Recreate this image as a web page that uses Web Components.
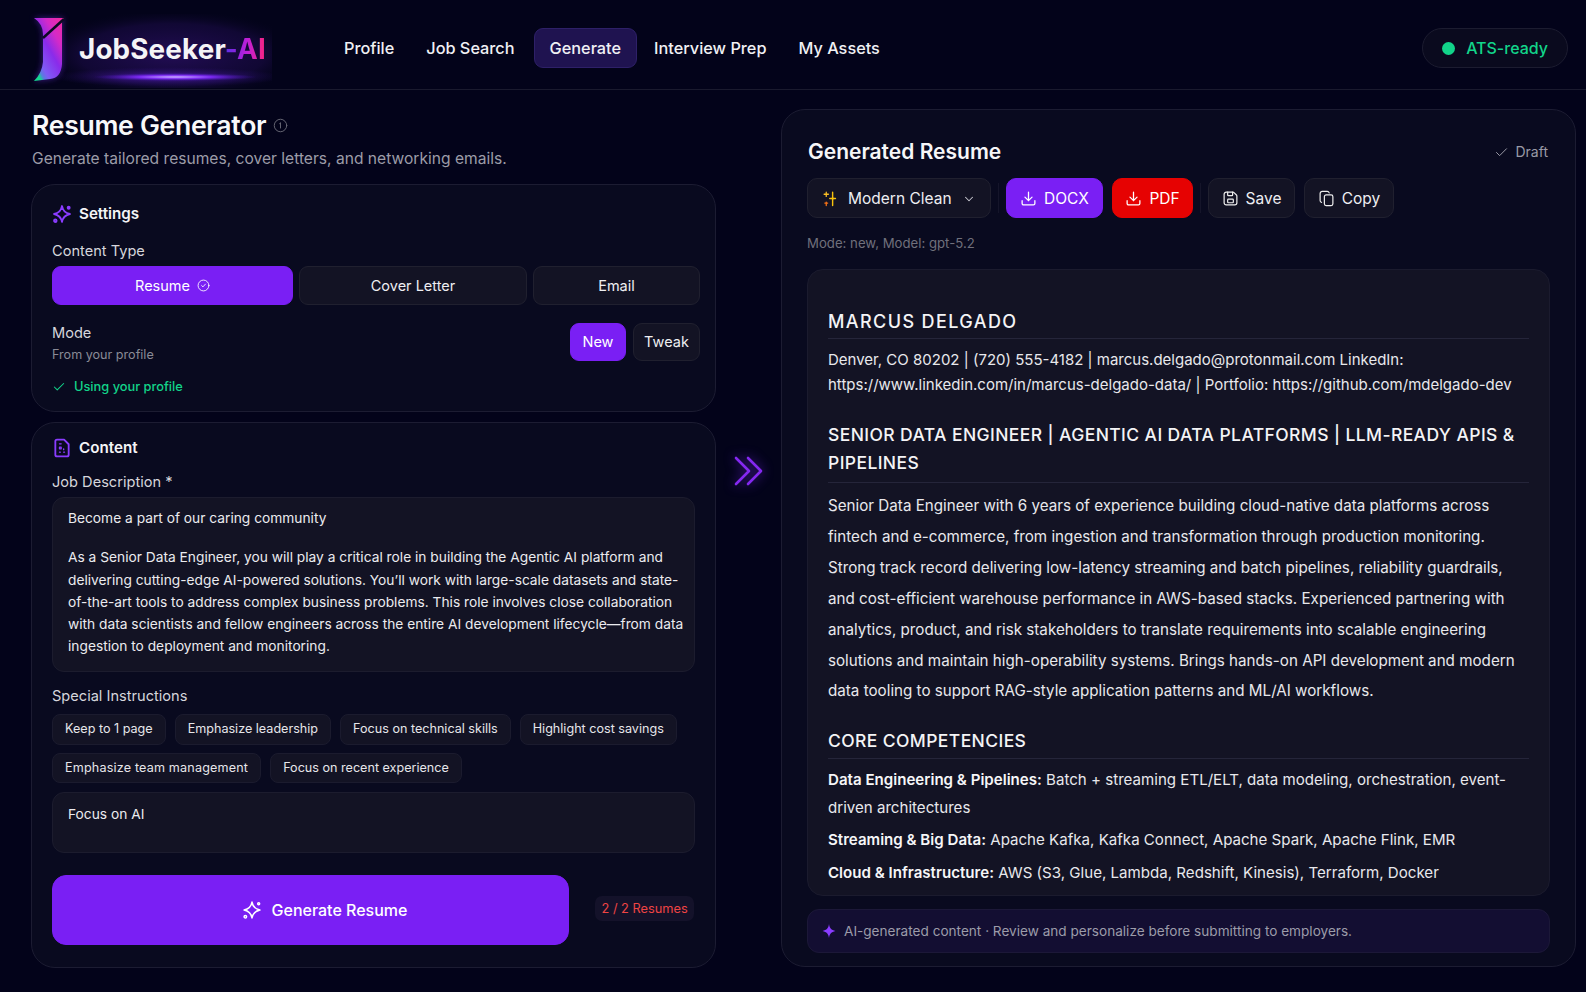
<!DOCTYPE html>
<html lang="en"><head><meta charset="utf-8"><title>Resume Generator</title>
<style>
html,body{margin:0;padding:0;background:#03031a;}
body{width:1586px;height:992px;overflow:hidden;font-family:Inter,"Liberation Sans",sans-serif;color:#f2f2f5;}
</style></head><body>
<js-app></js-app>
<script>
const I={
 spark2:'<path d="M12 2.500c1 5.700 3.500 8.200 9.500 9.500-6 1.300-8.500 3.800-9.500 9.500-1-5.700-3.500-8.200-9.500-9.500 6-1.300 8.500-3.800 9.500-9.500z"/><circle cx="20" cy="4.500" r="1.200"/><circle cx="4" cy="20" r="1.500"/>',
 file:'<path d="M6 2h8.500L20 7.500V20a2 2 0 0 1-2 2H6a2 2 0 0 1-2-2V4a2 2 0 0 1 2-2z"/><path d="M9 7h2M9 11h2v2H9zM9 17h1M14 13v1M14 17h1" stroke-width="1.600"/>',
 check:'<path d="M20 6 9 17l-5-5"/>',
 checkc:'<circle cx="12" cy="12" r="10"/><path d="m8.500 12 2.500 2.500 4.500-5"/>',
 down:'<path d="m6 9 6 6 6-6"/>',
 dl:'<path d="M12 3v12M7 10l5 5 5-5M21 15v4a2 2 0 0 1-2 2H5a2 2 0 0 1-2-2v-4"/>',
 save:'<path d="M6 3h9.500a2 2 0 0 1 1.400.6l3.500 3.500a2 2 0 0 1 .6 1.400V18a3 3 0 0 1-3 3H6a3 3 0 0 1-3-3V6a3 3 0 0 1 3-3z"/><path d="M8 3v4a1 1 0 0 0 1 1h5a1 1 0 0 0 1-1V3"/><rect x="8" y="13" width="8" height="5" rx="1"/>',
 copy:'<rect x="9" y="7" width="12" height="15" rx="2.500"/><path d="M5 17.500a2.500 2.500 0 0 1-2-2.500V5a3 3 0 0 1 3-3h7a3 3 0 0 1 2.800 2"/>',
 info:'<circle cx="12" cy="12" r="10"/><path d="M10.500 9 12 7.500V16"/>',
};
const svg=(n,s,c='currentColor',w=2)=>`<svg width="${s}" height="${s}" viewBox="0 0 24 24" fill="none" stroke="${c}" stroke-width="${w}" stroke-linecap="round" stroke-linejoin="round" style="display:block;flex:none">${I[n]}</svg>`;
const wand=`<svg width="17" height="17" viewBox="0 0 24 24" style="display:block;flex:none" fill="none" stroke-linecap="round"><path d="M15 3v19M11 12h8" stroke="#f8c20c" stroke-width="2"/><path d="M15 8.500c.3 2.300 1 3 3.500 3.500-2.500.5-3.200 1.200-3.500 3.500-.3-2.300-1-3-3.500-3.500 2.500-.5 3.200-1.200 3.500-3.500z" fill="#f8c20c"/><path d="M6 3v6M3 6h6" stroke="#fbbf24" stroke-width="1.800"/><path d="M6 17v5M4 18.500h4" stroke="#f97316" stroke-width="1.800"/></svg>`;
function def(name,css,html){
 customElements.define(name,class extends HTMLElement{
  constructor(){super();const r=this.attachShadow({mode:'open'});
   r.innerHTML=`<style>${css}</style>${html}`;}
 });
}
def('js-logo',`:host{display:block;position:relative;width:244px;height:78px;flex:none}
 svg{position:absolute;left:0;top:0}
 span{position:absolute;left:51px;top:20px;font:700 27.800px/38px Inter,sans-serif;letter-spacing:.15px;color:#f4f4f6;white-space:nowrap}
 b{font-weight:700;background:linear-gradient(90deg,#5a30e8 0,#7a28e0 18%,#c01fd8 55%,#f0248c 92%);-webkit-background-clip:text;background-clip:text;color:transparent}`,
 `<svg width="244" height="78" viewBox="0 0 244 78">
  <defs>
  <radialGradient id="g" cx=".55" cy=".55" r=".6"><stop offset="0" stop-color="#2a0f63" stop-opacity=".8"/><stop offset=".7" stop-color="#1a0b45" stop-opacity=".6"/><stop offset="1" stop-color="#0a0624" stop-opacity="0"/></radialGradient>
  <radialGradient id="h" cx=".5" cy=".5" r=".5"><stop offset="0" stop-color="#fff"/><stop offset=".12" stop-color="#b68cff"/><stop offset=".45" stop-color="#7a28f0"/><stop offset="1" stop-color="#3a0fa0" stop-opacity="0"/></radialGradient>
  <radialGradient id="h2" cx=".5" cy=".5" r=".5"><stop offset="0" stop-color="#5a1fc0" stop-opacity=".85"/><stop offset="1" stop-color="#2a0f70" stop-opacity="0"/></radialGradient>
  <linearGradient id="j" x1=".95" y1="0" x2=".1" y2="1"><stop offset="0" stop-color="#f42aa0"/><stop offset=".28" stop-color="#d42ac8"/><stop offset=".5" stop-color="#8a2bea"/><stop offset=".78" stop-color="#7e5cf5"/><stop offset=".86" stop-color="#5a7ae0"/><stop offset=".93" stop-color="#14d890"/></linearGradient>
  <filter id="b" x="-30%" y="-30%" width="160%" height="160%"><feGaussianBlur stdDeviation="3"/></filter>
  </defs>
  <rect x="22" y="4" width="222" height="74" fill="url(#g)"/>
  <ellipse cx="140" cy="67" rx="116" ry="10" fill="url(#h2)"/>
  <ellipse cx="147" cy="67" rx="82" ry="4" fill="url(#h)"/>
  <path d="M6 8H36L34 12V54Q33 68 22 69L6 71Q14 63 15 52V24Q15 14 6 8Z" fill="#6a2be0" opacity=".55" filter="url(#b)"/>
  <path d="M6 8H36L34 12V54Q33 68 22 69L6 71Q14 63 15 52V24Q15 14 6 8Z" fill="url(#j)"/>
  <path d="M36 9L15 28" stroke="#0c0a24" stroke-width="2.500"/>
 </svg><span>JobSeeker<b>-AI</b></span>`);
def('js-nav-item',`:host{display:flex;align-items:center;height:38px;padding:0 14px;font:500 16.300px/20px Inter,sans-serif;color:#f0f0f4;border:1px solid transparent;border-radius:9px}
 :host([active]){background:#1f1350;border-color:#2e2068;padding:0 15px;margin-left:2px}`,`<slot></slot>`);
def('js-status',`:host{display:flex;align-items:center;gap:11px;height:38px;padding:0 19px;border:1px solid #1c1c30;border-radius:20px;background:#0a0a1e;color:#12d48a;font:500 16px/20px Inter,sans-serif}
 i{width:13px;height:13px;border-radius:50%;background:#12d48a}`,`<i></i><slot></slot>`);
def('js-header',`:host{display:flex;align-items:center;height:82px;padding:7px 18px 0 28px;border-bottom:1px solid #1a1a2e;box-sizing:content-box}
 .logo{margin-top:1px}.nav{display:flex;gap:2px;margin-left:57px;flex:1}`,
 `<js-logo class="logo"></js-logo><div class="nav"><slot name="nav"></slot></div><slot name="status"></slot>`);
def('js-card',`:host{display:block;box-sizing:border-box;background:#090a1f;border:1px solid #1c1c32;border-radius:24px;padding:var(--p,16px 20px)}`,`<slot></slot>`);
def('js-title',`:host{display:flex;align-items:center;gap:7px;height:22px;font:600 15.200px/22px Inter,sans-serif;color:#f4f4f6}`,`<slot name="i"></slot><slot></slot>`);
def('js-label',`:host{display:block;font:400 14.600px/20px Inter,sans-serif;color:#d6d6dc}`,`<slot></slot>`);
def('js-btn',`:host{display:inline-flex;align-items:center;justify-content:center;gap:7px;box-sizing:border-box;height:var(--h,39px);padding:0 10px;border-radius:9px;border:1px solid #20202f;background:#131324;color:#eeeef2;font:400 14.500px/20px Inter,sans-serif;white-space:nowrap}
 :host([primary]){background:#7a1ff4;border-color:#7a1ff4;color:#fff}
 :host([red]){background:#e60202;border-color:#e60202;color:#fff}`,`<slot name="i"></slot><slot></slot><slot name="e"></slot>`);
def('js-chip',`:host{display:inline-flex;align-items:center;box-sizing:border-box;height:30.500px;padding:0 12px;border-radius:8px;border:1px solid #1b1b2e;background:#131324;color:#e6e6ea;font:400 12.600px/18px Inter,sans-serif;white-space:nowrap}`,`<slot></slot>`);
def('js-area',`:host{display:block;box-sizing:border-box;width:643px;padding:var(--ap,9px 8px 9px 15px);background:#131324;border:1px solid #1c1c2e;border-radius:12px;color:#ebebef;font:400 13.750px/22.300px Inter,sans-serif}`,`<slot></slot>`);
def('js-resume',`:host{display:block;box-sizing:border-box;height:627px;overflow:hidden;background:#131324;border:1px solid #1b1b2e;border-radius:16px;padding:40px 20px 0;color:#e8e8ec;font:400 15.100px/25px Inter,sans-serif}
 h1,h2{margin:0;font-weight:500;color:#f4f4f6;border-bottom:1px solid #25253a;text-transform:uppercase}
 h1{font-size:18px;line-height:24px;letter-spacing:1.400px;padding-bottom:4px}
 h2{font-size:17.500px;line-height:28px;letter-spacing:.4px;padding-bottom:5px;margin-top:24px}
 h2.c{line-height:24px;margin-top:22px}
 p{margin:8px 0 0}
 .k{font-size:15px}
 .s{line-height:30.900px;font-size:15.200px}
 .l{line-height:27.500px;margin-top:5px}
 b{font-weight:600;color:#f6f6f8}`,
 `<h1>Marcus Delgado</h1>
 <p class="k">Denver, CO 80202 | (720) 555-4182 | marcus.delgado@protonmail.com LinkedIn: https://www.linkedin.com/in/marcus-delgado-data/ | Portfolio: https://github.com/mdelgado-dev</p>
 <h2>Senior Data Engineer | Agentic AI Data Platforms | LLM-Ready APIs &amp; Pipelines</h2>
 <p class="s">Senior Data Engineer with 6 years of experience building cloud-native data platforms across fintech and e-commerce, from ingestion and transformation through production monitoring. Strong track record delivering low-latency streaming and batch pipelines, reliability guardrails, and cost-efficient warehouse performance in AWS-based stacks. Experienced partnering with analytics, product, and risk stakeholders to translate requirements into scalable engineering solutions and maintain high-operability systems. Brings hands-on API development and modern data tooling to support RAG-style application patterns and ML/AI workflows.</p>
 <h2 class="c">Core Competencies</h2>
 <div><p class="l" style="margin-top:7px"><b>Data Engineering &amp; Pipelines:</b> Batch + streaming ETL/ELT, data modeling, orchestration, event-driven architectures</p>
 <p class="l"><b>Streaming &amp; Big Data:</b> Apache Kafka, Kafka Connect, Apache Spark, Apache Flink, EMR</p>
 <p class="l"><b>Cloud &amp; Infrastructure:</b> AWS (S3, Glue, Lambda, Redshift, Kinesis), Terraform, Docker</p></div>`);
def('js-settings',`:host{display:block}
 js-card{height:228px;--p:18px 15px 14px 20px}
 js-label{margin-top:16px}
 .types{display:grid;grid-template-columns:241px 228px 167px;gap:6px;margin-top:5px}
 .mode{display:flex;justify-content:space-between;margin-top:18px;height:42px}
 .sub{font:400 12.600px/20px Inter,sans-serif;color:#8a8a96;margin-top:2px}
 .mb{display:flex;gap:7px}
 .mb js-btn{--h:38px}
 .ok{display:flex;align-items:center;gap:8px;margin-top:12px;font:500 12.800px/20px Inter,sans-serif;color:#12d48a;height:20px}`,
 `<js-card><js-title><span slot="i">${svg('spark2',20,'#8a3cff',2.300)}</span>Settings</js-title>
 <js-label>Content Type</js-label>
 <div class="types"><js-btn primary>Resume ${svg('checkc',13,'#fff',1.600)}</js-btn><js-btn>Cover Letter</js-btn><js-btn>Email</js-btn></div>
 <div class="mode"><div><js-label style="margin:0">Mode</js-label><div class="sub">From your profile</div></div>
 <div class="mb"><js-btn primary style="width:56px">New</js-btn><js-btn style="width:67px">Tweak</js-btn></div></div>
 <div class="ok">${svg('check',14,'#12d48a',1.800)}Using your profile</div></js-card>`);
def('js-content',`:host{display:block}
 js-card{height:546px;--p:14px 15px 21px 20px;margin-top:10px}
 p{margin:0}p+p{margin-top:17px}
 .chips{display:flex;flex-wrap:wrap;gap:8px 9px;margin-top:8px;width:640px}
 .gen{display:flex;align-items:center;margin-top:22px}
 .gen js-btn{--h:70px;width:517px;border-radius:14px;font-size:16px;font-weight:500;gap:10px;padding-left:38px}
 .q{margin-left:26px;height:25px;padding:0 6.500px;display:flex;align-items:center;margin-top:-3px;border-radius:7px;background:#14122a;color:#ef4444;font:400 12.800px/18px Inter,sans-serif}`,
 `<js-card><js-title><span slot="i">${svg('file',20,'#8a3cff',2.200)}</span>Content</js-title>
 <js-label style="margin-top:13px">Job Description *</js-label>
 <js-area style="margin-top:5px;height:175px"><p>Become a part of our caring community</p><p>As a Senior Data Engineer, you will play a critical role in building the Agentic AI platform and delivering cutting-edge AI-powered solutions. You’ll work with large-scale datasets and state-of-the-art tools to address complex business problems. This role involves close collaboration with data scientists and fellow engineers across the entire AI development lifecycle—from data ingestion to deployment and monitoring.</p></js-area>
 <js-label style="margin-top:14px">Special Instructions</js-label>
 <div class="chips"><js-chip>Keep to 1 page</js-chip><js-chip>Emphasize leadership</js-chip><js-chip>Focus on technical skills</js-chip><js-chip>Highlight cost savings</js-chip><js-chip style="letter-spacing:.17px">Emphasize team management</js-chip><js-chip>Focus on recent experience</js-chip></div>
 <js-area style="margin-top:9px;height:61px;--ap:10px 15px">Focus on AI</js-area>
 <div class="gen"><js-btn primary><span slot="i">${svg('spark2',20,'#fff',1.800)}</span>Generate Resume</js-btn><div class="q">2 / 2 Resumes</div></div>
 </js-card>`);
def('js-output',`:host{display:block}
 js-card{height:858px;--p:27px 25px 13px 25px}
 .top{display:flex;justify-content:space-between;align-items:center;height:30px}
 h2{margin:0 0 0 1px;font:600 21px/30px Inter,sans-serif;color:#f6f6f8}
 .d{display:flex;align-items:center;gap:6px;font:400 14px/20px Inter,sans-serif;color:#9a9aa6;margin-right:2px}
 .bar{display:flex;align-items:center;margin-top:11px;height:40px;--h:40px}
 .bar js-btn{font-size:15.500px;border-radius:10px;padding-top:1px}
 .sep{width:1px;height:30px;background:#15152a;margin:0 7px}
 .m{font:400 13.200px/18px Inter,sans-serif;color:#70707c;margin-top:16px}
 js-resume{margin-top:17px}
 .f{display:flex;align-items:center;gap:8px;height:44px;box-sizing:border-box;margin-top:13px;padding:0 14px;border:1px solid #1c1838;border-radius:12px;background:#130e32;color:#9c9caa;font:400 13.600px/18px Inter,sans-serif}
 .star{flex:none}`,
 `<js-card><div class="top"><h2>Generated Resume</h2><div class="d">${svg('check',15,'#9a9aa6',1.600)}Draft</div></div>
 <div class="bar"><js-btn style="width:184px;gap:0;justify-content:flex-start;padding-left:14px"><span slot="i" style="margin-right:9px">${wand}</span>Modern Clean<span slot="e" style="margin-left:10px">${svg('down',14,'#c8c8d0',1.800)}</span></js-btn>
 <div class="sep"></div>
 <js-btn primary style="width:97px"><span slot="i">${svg('dl',17,'#fff',1.800)}</span>DOCX</js-btn><span style="width:9px"></span><js-btn red style="width:81px"><span slot="i">${svg('dl',17,'#fff',1.800)}</span>PDF</js-btn>
 <div class="sep"></div>
 <js-btn style="width:87px"><span slot="i">${svg('save',17,'#eee',1.700)}</span>Save</js-btn><span style="width:9px"></span><js-btn style="width:90px"><span slot="i">${svg('copy',17,'#eee',1.700)}</span>Copy</js-btn></div>
 <div class="m">Mode: new, Model: gpt-5.2</div>
 <js-resume></js-resume>
 <div class="f"><svg class="star" width="14" height="14" viewBox="0 0 24 24" fill="#8a3cff"><path d="M12 0c1 7 4 10.500 11 12-7 1.500-10 5-11 12-1-7-4-10.500-11-12 7-1.500 10-5 11-12z"/></svg>AI-generated content · Review and personalize before submitting to employers.</div></js-card>`);
def('js-app',`:host{display:block}
 main{display:grid;grid-template-columns:685px 65px 795px;padding-left:31px}
 h1{margin:19px 0 0 1px;font:600 26.600px/32px Inter,sans-serif;color:#f8f8fa;display:flex;align-items:center;gap:7px;letter-spacing:-.3px}
 .s{margin:6px 0 13px 1px;font:400 15.600px/24px Inter,sans-serif;color:#9c9ca8}
 .arrow{display:flex;justify-content:center;padding-top:366px}
 .r{padding-top:19px}`,
 `<js-header>
  <js-nav-item slot="nav">Profile</js-nav-item><js-nav-item slot="nav">Job Search</js-nav-item><js-nav-item slot="nav" active>Generate</js-nav-item><js-nav-item slot="nav">Interview Prep</js-nav-item><js-nav-item slot="nav">My Assets</js-nav-item>
  <js-status slot="status">ATS-ready</js-status></js-header>
 <main><div><h1>Resume Generator<span>${svg('info',15,'#6a6a76',1.500)}</span></h1><div class="s">Generate tailored resumes, cover letters, and networking emails.</div><js-settings></js-settings><js-content></js-content></div>
 <div class="arrow"><svg width="30" height="30" viewBox="0 0 30 30" fill="none" stroke="#8428f0" stroke-width="2.600" stroke-linecap="round" stroke-linejoin="round" style="filter:drop-shadow(0 0 6px #5a1fc0)"><path d="M2 2l13 13L2 28M14 2l13 13-13 13"/></svg></div>
 <div class="r"><js-output></js-output></div></main>`);
</script>
</body></html>
